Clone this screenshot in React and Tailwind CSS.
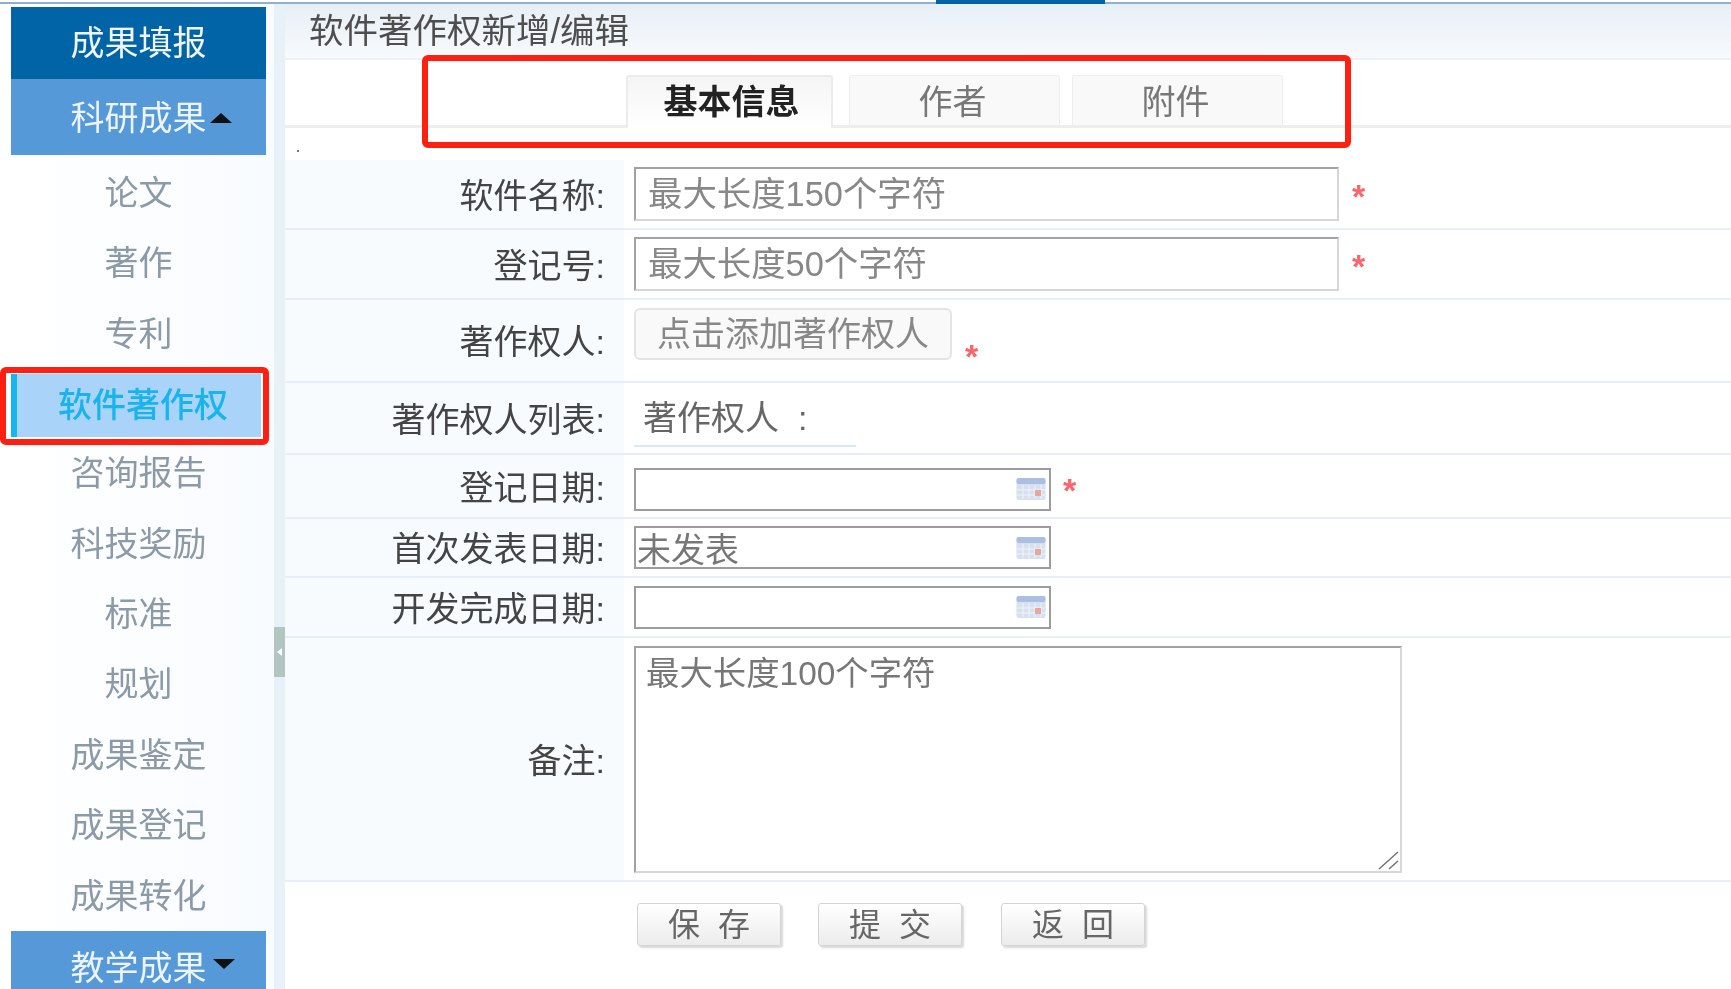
const subItems = ['论文', '著作', '专利', '软件著作权', '咨询报告', '科技奖励', '标准', '规划', '成果鉴定', '成果登记', '成果转化'];

function Star({ className = '' }) {
  return <span className={`text-[34px] font-bold leading-none text-[#fb6468] ${className}`}>*</span>;
}

function CalendarIcon() {
  return (
    <svg width="30" height="24" viewBox="0 0 30 24" className="absolute right-[5px] top-1/2 -translate-y-1/2">
      <rect x="0.5" y="1" width="29" height="22" rx="2" fill="#d6e0ef" />
      <rect x="0.5" y="1" width="29" height="6" rx="2" fill="#a9c0e3" />
      <path d="M7 8v14M13 8v14M19 8v14M25 8v14M1 13h28M1 18h28" stroke="#f1f4f9" strokeWidth="1" />
      <rect x="19" y="13" width="6" height="6" fill="#e8a79c" />
    </svg>
  );
}

function DateInput({ value }) {
  return (
    <div className="relative h-[43px] w-[417px]">
      <input
        defaultValue={value}
        className="h-full w-full border-2 border-[#9c9c9c] bg-white pl-[1px] pr-9 text-[34px] text-[#777] outline-none"
      />
      <CalendarIcon />
    </div>
  );
}

function TextInput({ placeholder }) {
  return (
    <input
      placeholder={placeholder}
      className="h-[54px] w-[705px] border-2 border-t-[#a2a2a2] border-l-[#a2a2a2] border-r-[#d6d6d6] border-b-[#d6d6d6] bg-white pl-[12px] text-[34.4px] text-[#777] outline-none placeholder:text-[#888]"
    />
  );
}

function Row({ label, height, children, align = 'items-center' }) {
  return (
    <div className={`flex border-b-2 border-[#e6eff8] ${height}`}>
      <div className="flex w-[339px] shrink-0 items-center justify-end bg-[#f8fbfe] pr-[19px] pt-[4px] text-[34px] text-[#444]">
        {label}
      </div>
      <div className={`flex flex-1 pl-[10px] ${align}`}>{children}</div>
    </div>
  );
}

function BottomButton({ text }) {
  return (
    <button className="h-[43px] w-[144px] rounded-[3px] border border-[#d4d4d4] bg-gradient-to-b from-white to-[#ececec] text-[32px] leading-none tracking-[18px] text-[#666] shadow-[2px_2px_2px_#d8d8d8]">
      <span className="pl-[18px]">{text}</span>
    </button>
  );
}

export default function App() {
  return (
    <div className="relative h-[989px] w-[1731px] overflow-hidden bg-white font-['Liberation_Sans','Noto_Sans_CJK_SC',sans-serif] blur-[0.6px]">
      {/* top line */}
      <div className="h-[4px] border-b-2 border-[#8fb0d0]">
        <div className="ml-[936px] h-[4px] w-[169px] bg-[#0064a6]" />
      </div>

      <div className="flex h-[985px]">
        {/* sidebar */}
        <div className="w-[274px] shrink-0 bg-gradient-to-r from-white to-[#f8fbff] pt-[3px]">
          <div className="ml-[11px] w-[255px]">
            <div className="flex h-[72px] items-center justify-center bg-[#0064a6] text-[34px] text-[#f1f5f9]">成果填报</div>
            <div className="relative flex h-[76px] items-center justify-center bg-[#5599d9] pt-[2px] text-[34px] text-[#eef4fb]">
              科研成果
              <svg width="22" height="10" viewBox="0 0 22 10" className="absolute left-[199px] top-[34px]">
                <path d="M11 0 22 10H0Z" fill="#111" />
              </svg>
            </div>
          </div>
          <div className="mt-[2.8px]">
            {subItems.map((name) =>
              name === '软件著作权' ? (
                <div key={name} className="h-[69px] pt-[5px]">
                  <div className="ml-[11px] flex h-[63px] w-[250px] items-center justify-center border-l-[6px] border-[#16b6ee] bg-[#a9d3f9] pl-[8px] text-[34px] font-medium text-[#1ab4ec]">
                    {name}
                  </div>
                </div>
              ) : (
                <div key={name} className="ml-[11px] flex h-[70.4px] w-[255px] items-center justify-center pt-[1px] text-[34px] text-[#8c9aa8]">
                  {name}
                </div>
              )
            )}
          </div>
          <div className="relative ml-[11px] flex h-[76px] w-[255px] items-center justify-center bg-[#5599d9] text-[34px] text-[#eef4fb]">
            教学成果
            <svg width="22" height="10" viewBox="0 0 22 10" className="absolute left-[202px] top-[28px]">
              <path d="M0 0H22L11 10Z" fill="#111" />
            </svg>
          </div>
        </div>

        {/* splitter */}
        <div className="relative w-[11px] shrink-0 bg-[#e9f1f8]">
          <div className="absolute left-0 top-[623px] flex h-[50px] w-[11px] items-center justify-center bg-[#b1c5c1]">
            <div className="h-0 w-0 border-y-[4px] border-r-[5px] border-y-transparent border-r-white" />
          </div>
        </div>

        {/* main */}
        <div className="flex-1">
          <div className="flex h-[56px] items-center border-b-2 border-[#eef2f6] bg-gradient-to-b from-[#e7eff7] to-[#f8fafc] pl-[24px] pt-[2px] text-[34.5px] text-[#4e4e4e]">
            软件著作权新增/编辑
          </div>

          {/* tabs */}
          <div className="flex h-[68px] items-end border-b-[3px] border-[#eeeeee] pl-[341px]">
            <div className="-mb-[3px] flex h-[53px] w-[207px] items-center justify-center rounded-t-[3px] border-x-2 border-t-2 border-[#ececec] bg-gradient-to-b from-[#f5f5f5] to-white pl-[4px] text-[34px] font-bold text-[#222]">
              基本信息
            </div>
            <div className="ml-[16px] flex h-[50px] w-[211px] items-center justify-center rounded-t-[3px] border-x border-t border-[#eeeeee] bg-[#f9f9f9] pr-[4px] pt-[4px] text-[34px] text-[#777]">
              作者
            </div>
            <div className="ml-[12px] flex h-[50px] w-[211px] items-center justify-center rounded-t-[3px] border-x border-t border-[#eeeeee] bg-[#f9f9f9] pr-[4px] pt-[4px] text-[34px] text-[#777]">
              附件
            </div>
          </div>

          <div className="h-[32px] pl-[12px] pt-[22px]">
            <div className="h-[2px] w-[2px] bg-[#777]" />
          </div>

          {/* form */}
          <Row label="软件名称:" height="h-[70px]">
            <TextInput placeholder="最大长度150个字符" />
            <Star className="ml-[13px] mt-[4px]" />
          </Row>
          <Row label="登记号:" height="h-[70px]">
            <TextInput placeholder="最大长度50个字符" />
            <Star className="ml-[13px] mt-[4px]" />
          </Row>
          <Row label="著作权人:" height="h-[83px]" align="items-start pt-[8px]">
            <button className="h-[52px] w-[318px] rounded-[6px] border-2 border-[#e4e4e4] bg-[#f9f9f9] text-[34px] leading-none text-[#888]">
              点击添加著作权人
            </button>
            <Star className="ml-[13px] mt-[31px]" />
          </Row>
          <Row label="著作权人列表:" height="h-[72px]" align="items-start">
            <div className="flex h-[64px] w-[222px] items-center whitespace-pre border-b-2 border-[#dce8f4] pl-[9px] pt-[8px] text-[34px] text-[#666]">
              著作权人  :
            </div>
          </Row>
          <Row label="登记日期:" height="h-[64px]" align="items-center pt-[6px]">
            <DateInput />
            <Star className="ml-[12px] mt-[1px]" />
          </Row>
          <Row label="首次发表日期:" height="h-[59px]">
            <DateInput value="未发表" />
          </Row>
          <Row label="开发完成日期:" height="h-[60px]">
            <DateInput />
          </Row>
          <Row label="备注:" height="h-[244px]" align="items-start pt-[8px]">
            <div className="relative h-[227px] w-[768px]">
              <textarea
                placeholder="最大长度100个字符"
                className="h-full w-full resize-none border-2 border-t-[#a2a2a2] border-l-[#a2a2a2] border-r-[#d6d6d6] border-b-[#d6d6d6] bg-white px-[10px] py-[1px] text-[33.4px] text-[#777] outline-none placeholder:text-[#777]"
              />
              <svg width="22" height="20" viewBox="0 0 22 20" className="absolute bottom-[3px] right-[2px]">
                <path d="M1 19 20 2M11 19 20 11" stroke="#777" strokeWidth="1.6" fill="none" />
              </svg>
            </div>
          </Row>

          <div className="flex pl-[352px] pt-[21px]">
            <BottomButton text="保存" />
            <div className="ml-[37px]">
              <BottomButton text="提交" />
            </div>
            <div className="ml-[39px]">
              <BottomButton text="返回" />
            </div>
          </div>
        </div>
      </div>

      {/* red annotation boxes */}
      <div className="absolute left-0 top-[367px] h-[78px] w-[269px] rounded-[6px] border-[6px] border-[#ff1f10]" />
      <div className="absolute left-[422px] top-[55px] h-[93px] w-[929px] rounded-[6px] border-[6px] border-[#ff1f10]" />
    </div>
  );
}
